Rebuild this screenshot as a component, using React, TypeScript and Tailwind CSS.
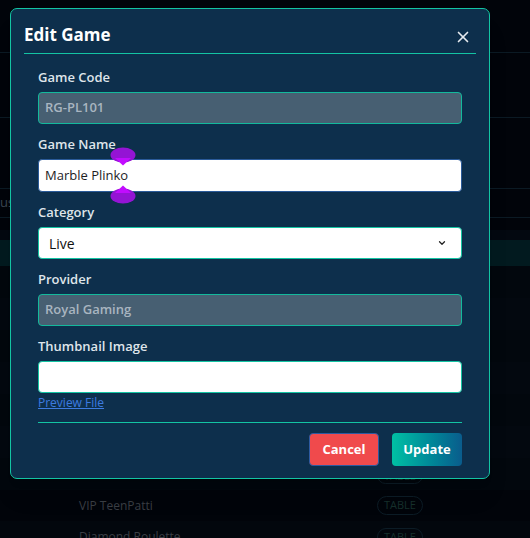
import { X, ChevronDown } from "lucide-react";

const font = { fontFamily: '"Open Sans", "Liberation Sans", sans-serif' };

function Field({ label, children }: { label: string; children: React.ReactNode }) {
  return (
    <div className="mb-[10px]">
      <p className="text-[13px] leading-[20px] font-semibold text-[#dfe5ea] mb-[5px]">{label}</p>
      {children}
    </div>
  );
}

function SelectionHandle({ flip }: { flip?: boolean }) {
  return (
    <svg width="26" height="19" viewBox="0 0 26 19" className={flip ? "rotate-180" : ""}>
      <ellipse cx="13" cy="8" rx="12.5" ry="7.5" fill="#9414d4" />
      <path d="M5 11 L13 18.5 L21 11 Z" fill="#c20cff" />
    </svg>
  );
}

function Badge() {
  return <span className="px-[6px] rounded-full border border-[#0c1c26] text-[11px] text-[#16302c]">TABLE</span>;
}

function BackgroundTable() {
  return (
    <div className="w-[530px] h-[538px] bg-[#01040a] flex flex-col">
      <div className="h-[52px] shrink-0" />
      <div className="h-[66px] shrink-0 border-t border-b border-[#0b1a24]" />
      <div className="h-[70px] shrink-0" />
      <div className="h-[30px] shrink-0 border-t border-b border-[#0b1a24] flex items-center">
        <span className="text-[13px] text-[#3b4652]">us</span>
      </div>
      <div className="h-[12px] shrink-0" />
      <div className="h-[10px] shrink-0 bg-[#030810]" />
      <div className="h-[26px] shrink-0 bg-[#021a1f]" />
      <div className="h-[32px] shrink-0 bg-[#02070d]" />
      <div className="h-[32px] shrink-0 bg-[#03080f]" />
      <div className="h-[32px] shrink-0 bg-[#02070d]" />
      <div className="h-[32px] shrink-0 bg-[#03080f]" />
      <div className="h-[32px] shrink-0 bg-[#02070d]" />
      <div className="h-[32px] shrink-0 bg-[#03080f]" />
      <div className="h-[32px] shrink-0 bg-[#02070d] flex items-center">
        <span className="ml-[377px]"><Badge /></span>
      </div>
      <div className="h-[31px] shrink-0 bg-[#01040a] flex items-center">
        <span className="ml-[79px] w-[298px] text-[12px] text-[#3a3e44]">VIP TeenPatti</span>
        <Badge />
      </div>
      <div className="h-[32px] shrink-0 bg-[#02070d] flex items-center">
        <span className="ml-[79px] w-[298px] text-[12px] text-[#3a3e44]">Diamond Roulette</span>
        <Badge />
      </div>
    </div>
  );
}

export default function App() {
  return (
    <div className="relative w-[530px] h-[538px] overflow-hidden" style={font}>
      <BackgroundTable />

      <div className="absolute left-[10px] top-[8px] w-[480px] rounded-[7px] border border-[#13c4a3] bg-[#0d2f4c] shadow-xl">
        {/* Header */}
        <div className="mx-[13px] pt-[13px] pb-[6px] border-b border-[#13c4a3] flex items-center justify-between">
          <h2 className="text-[17px] leading-[25px] font-bold text-white">Edit Game</h2>
          <X className="w-[18px] h-[18px] text-[#e6ebef] mt-[5px] mr-[4px]" strokeWidth={2.2} />
        </div>

        {/* Body */}
        <div className="mx-[27px] pt-[13px]">
          <Field label="Game Code">
            <div className="h-[32px] rounded-[4px] border border-[#13b99c] bg-[#475f72] flex items-center px-[6px] text-[13px] font-semibold text-[#a9b5c0]">
              RG-PL101
            </div>
          </Field>
          <Field label="Game Name">
            <div className="relative">
              <div className="h-[33px] rounded-[4px] border border-[#2a5a99] bg-white flex items-center px-[6px] text-[13px] text-[#1d1d1f]">
                Marble Plinko
              </div>
              <div className="absolute left-[72px] -top-[12px]">
                <SelectionHandle />
              </div>
              <div className="absolute left-[72px] top-[26px]">
                <SelectionHandle flip />
              </div>
            </div>
          </Field>
          <Field label="Category">
            <div className="h-[32px] rounded-[4px] border border-[#13c4a3] bg-white flex items-center justify-between pl-[10px] pr-[14px] text-[14px] text-[#111]">
              Live
              <ChevronDown className="w-[10px] h-[10px] text-[#222]" strokeWidth={3} />
            </div>
          </Field>
          <Field label="Provider">
            <div className="h-[32px] rounded-[4px] border border-[#13b99c] bg-[#475f72] flex items-center px-[6px] text-[13px] font-semibold text-[#a9b5c0]">
              Royal Gaming
            </div>
          </Field>
          <div>
            <p className="text-[13px] leading-[20px] font-semibold text-[#dfe5ea] mb-[5px]">Thumbnail Image</p>
            <div className="h-[32px] rounded-[4px] border border-[#13c4a3] bg-white" />
            <a className="block mt-[2px] text-[12px] leading-[16px] text-[#3d7be0] underline">Preview File</a>
          </div>

          <div className="mt-[11px] border-t border-[#13c4a3]" />

          <div className="flex justify-end gap-[13px] pt-[10px] pb-[12px]">
            <button className="w-[70px] h-[33px] rounded-[4px] border border-[#2d5aa0] bg-[#f04a4c] text-white text-[13px] font-bold">
              Cancel
            </button>
            <button className="w-[70px] h-[33px] rounded-[4px] bg-gradient-to-r from-[#00c0a3] to-[#0a5c8c] text-white text-[13px] font-bold">
              Update
            </button>
          </div>
        </div>
      </div>
    </div>
  );
}
